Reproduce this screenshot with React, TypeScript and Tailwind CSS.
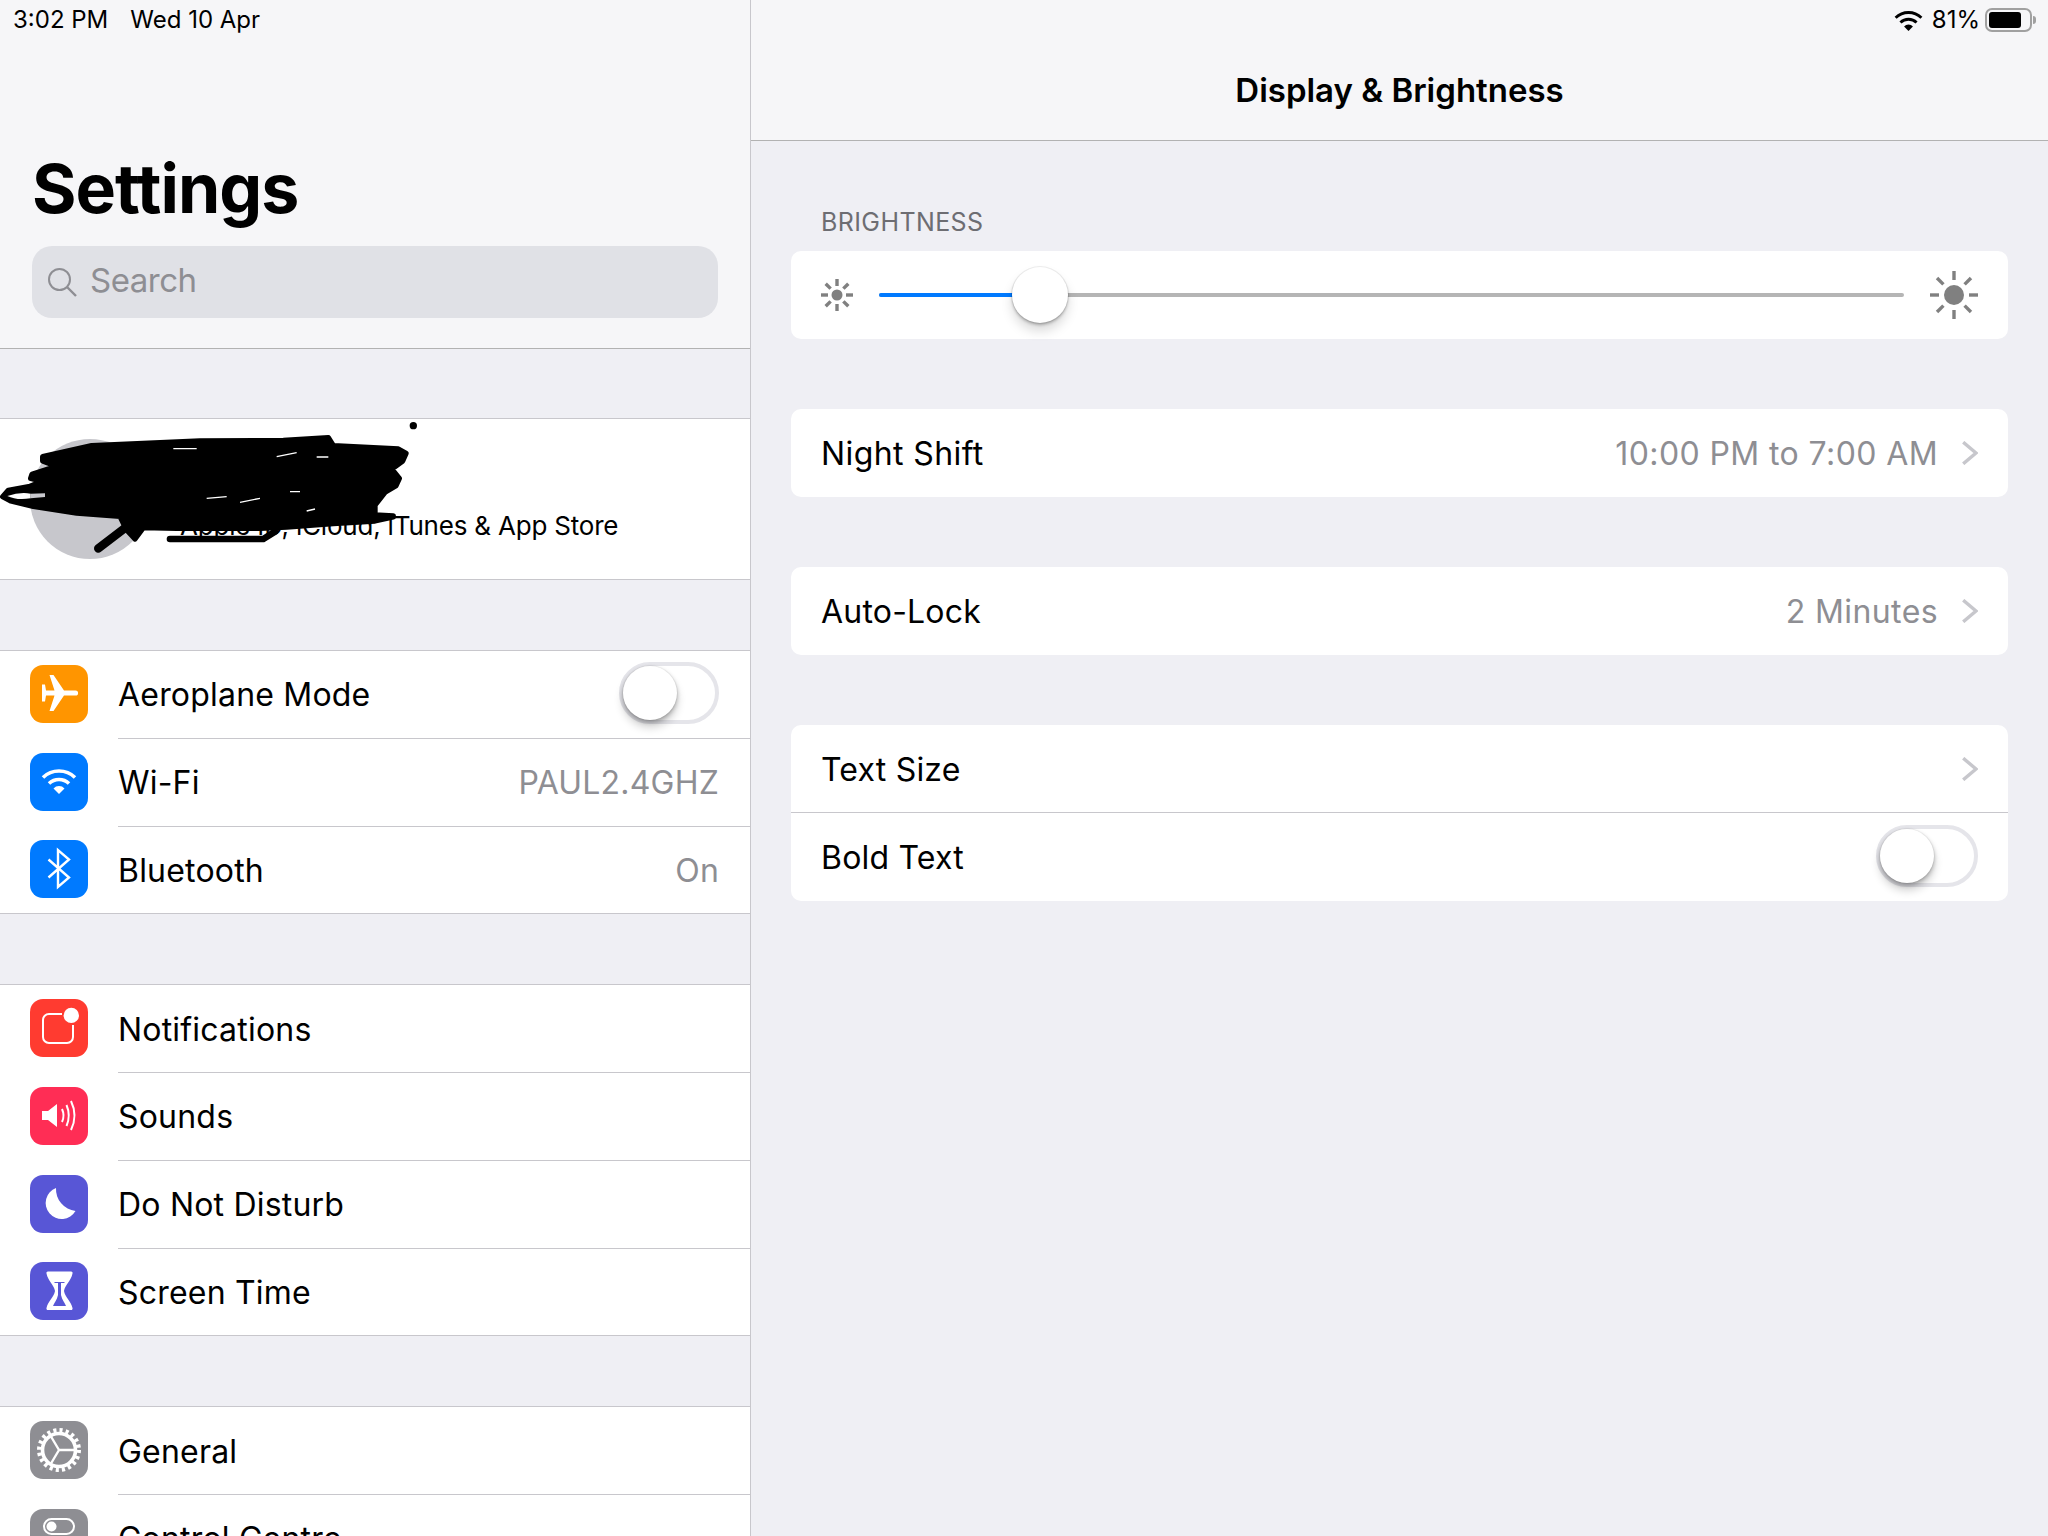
import type { ReactNode } from "react";

function Plane() {
  return (
    <svg viewBox="0 0 58 58" className="h-[58px] w-[58px]">
      <path fill="#fff" d="M45.5 25.4H34L23.5 10h-4l5 15.4H16l-1-5.9h-3v17h3l1-5.9h8.5L19.5 46h4L34 30.6h11.5a2.6 2.6 0 0 0 0-5.2Z" />
    </svg>
  );
}

function WifiFan({ className }: { className: string }) {
  return (
    <svg viewBox="0 0 36 26" className={className}>
      <path d="M2 9.5a23 23 0 0 1 32 0" fill="none" stroke="currentColor" strokeWidth="3.6" />
      <path d="M8 15.5a14.5 14.5 0 0 1 20 0" fill="none" stroke="currentColor" strokeWidth="3.6" />
      <path d="M12.5 20.5a7.5 7.5 0 0 1 11 0L18 26Z" fill="currentColor" />
    </svg>
  );
}

function Bluetooth() {
  return (
    <svg viewBox="0 0 58 58" className="h-[58px] w-[58px]">
      <path d="M18.5 19.5 39 37.5 28 47V10l11 9.5-20.5 18" fill="none" stroke="#fff" strokeWidth="2.4" />
    </svg>
  );
}

function Bell() {
  return (
    <svg viewBox="0 0 58 58" className="h-[58px] w-[58px]">
      <path d="M32 15H19a6 6 0 0 0-6 6v17a6 6 0 0 0 6 6h18a6 6 0 0 0 6-6V26" fill="none" stroke="#fff" strokeWidth="2" />
      <circle cx="41.3" cy="16.4" r="7.7" fill="#fff" />
    </svg>
  );
}

function Speaker() {
  return (
    <svg viewBox="0 0 58 58" className="h-[58px] w-[58px]">
      <path fill="#fff" d="M12 24h6l9-7v23l-9-7h-6Z" />
      <g fill="none" stroke="#fff" strokeWidth="2">
        <path d="M32 22q3 6.500 0 13" />
        <path d="M36.500 18q4.500 10.500 0 21" />
        <path d="M41 14q7 14.500 0 29" />
      </g>
    </svg>
  );
}

function Moon() {
  return (
    <svg viewBox="0 0 58 58" className="h-[58px] w-[58px]">
      <path fill="#fff" d="M26 13A16 16 0 1 0 45.500 36 22 22 0 0 1 26 13Z" />
    </svg>
  );
}

function Hourglass() {
  return (
    <svg viewBox="0 0 58 58" className="h-[58px] w-[58px]">
      <path fill="#fff" d="M18 9.500h23a1.500 1.500 0 0 1 1.500 2C41 19 35 23 34 29c1 6 7 10 8.500 17a1.500 1.500 0 0 1-1.500 2H18a1.500 1.500 0 0 1-1.500-2C18 39 24 35 25 29c-1-6-7-10-8.500-17.500a1.500 1.500 0 0 1 1.500-2Z" />
      <path fill="#5856d6" d="M24.500 20h10v1H31v12c1 5 4 8 5 11H23c1-3 4-6 5-11V21h-3.500Z" />
    </svg>
  );
}

function Gear() {
  return (
    <svg viewBox="0 0 58 58" className="h-[58px] w-[58px]">
      <g fill="none" stroke="#fff">
        <circle cx="29" cy="29" r="16.500" strokeWidth="3.600" />
        <circle cx="29" cy="29" r="19.500" strokeWidth="5" strokeDasharray="3.060 3.060" />
        <path d="M29 29h15M29 29l-8-13.500M29 29l-8 13.500" strokeWidth="2.400" />
      </g>
    </svg>
  );
}

function ToggleGlyph() {
  return (
    <svg viewBox="0 0 58 58" className="h-[58px] w-[58px]">
      <rect x="14" y="10" width="30" height="15" rx="7.500" fill="none" stroke="#fff" strokeWidth="2" />
      <circle cx="21.500" cy="17.500" r="5" fill="#fff" />
    </svg>
  );
}

function Sun({ size, r, inner }: { size: number; r: number; inner: number }) {
  const c = size / 2;
  return (
    <svg width={size} height={size} viewBox={`0 0 ${size} ${size}`} className="shrink-0">
      <circle cx={c} cy={c} r={r} fill="#808080" />
      <g stroke="#808080" strokeWidth="3.400">
        {[0, 45, 90, 135, 180, 225, 270, 315].map((a) => (
          <line key={a} x1={c} y1={0} x2={c} y2={c - inner} transform={`rotate(${a} ${c} ${c})`} />
        ))}
      </g>
    </svg>
  );
}

function Chevron() {
  return (
    <svg viewBox="0 0 16 24" className="h-6 w-4 shrink-0">
      <path d="M1.200 1.200 14 12 1.200 22.800" fill="none" stroke="#c7c7cc" strokeWidth="3.400" />
    </svg>
  );
}

function Switch({ wide }: { wide?: boolean }) {
  return (
    <div className={`relative mb-[2px] h-[62px] shrink-0 rounded-full border-[4px] border-[#e5e5ea] bg-white ${wide ? "w-[102px]" : "w-[100px]"}`}>
      <div className="h-[54px] w-[54px] rounded-full bg-white shadow-[0_7px_10px_rgba(0,0,0,0.2),0_2px_4px_rgba(0,0,0,0.25),0_0_0_1px_rgba(0,0,0,0.04)]" />
    </div>
  );
}

function Row({ icon, color, label, value, control, last }: { icon: ReactNode; color: string; label: string; value?: string; control?: ReactNode; last?: boolean }) {
  return (
    <div className={last ? "flex h-[86.75px] items-center" : "flex h-[87.75px] items-center"}>
      <div className={`mb-[2px] ml-[30px] h-[58px] w-[58px] shrink-0 rounded-[13px] ${color}`}>{icon}</div>
      <div className={`ml-[30px] flex h-full flex-1 items-center justify-between pr-[31px] ${last ? "" : "border-b border-[#c8c7cc]"}`}>
        <span className="pt-0.5 text-[32px] tracking-[0.2px] text-black">{label}</span>
        {value && <span className="pt-0.5 text-[32px] tracking-[0.2px] text-[#8e8e93]">{value}</span>}
        {control}
      </div>
    </div>
  );
}

// marker scribble over the account name, traced from the screenshot
function Scribble() {
  return (
    <svg viewBox="0 0 1290 450" className="absolute left-0 top-[-4px] h-[150px] w-[430px]">
      <path
        fill="#000"
        stroke="#000"
        strokeWidth="16"
        strokeLinejoin="round"
        d="M128 125 275 92 600 78 850 76 985 68 1000 92 1195 102 1218 115 1208 138 1175 162 1198 190 1188 212 1155 232 1125 270 1125 300 1180 303 1180 306 1125 318 1000 326 860 336 780 340 530 340 430 338 405 372 380 345 360 304 230 294 100 274 32 258 8 245 25 226 90 214 130 199 92 190 96 178 170 154 128 138Z"
      />
      <path d="M510 372H790L825 350" stroke="#000" strokeWidth="20" strokeLinecap="round" strokeLinejoin="round" fill="none" />
      <path d="M22 243Q60 230 92 236V250Q50 257 22 243Z" fill="#fff" />
      <path d="M92 236 135 235V246L92 250Z" fill="#c7c7cc" />
      <path d="M400 320 295 400" stroke="#000" strokeWidth="26" strokeLinecap="round" fill="none" />
      <path d="M520 101H590M830 125 890 113M950 126H985M620 250 680 245M720 262 780 250M920 288 945 282M870 230H900" stroke="#fff" strokeWidth="4" fill="none" />
      <circle cx="1240" cy="32" r="11" fill="#000" />
    </svg>
  );
}

export default function App() {
  return (
    <div className="flex h-[1536px] w-[2048px] overflow-hidden bg-[#efeff4] font-['Inter','Liberation_Sans',sans-serif]">
      <aside className="h-full w-[751px] shrink-0 overflow-hidden border-r border-[#c8c7cc]">
        <header className="flex h-[349px] flex-col border-b border-[#b2b2b2] bg-[#f6f6f8]">
          <div className="flex h-10 items-center gap-[22px] pl-[13px] text-[24px] tracking-[0px] text-black">
            <span>3:02 PM</span>
            <span>Wed 10 Apr</span>
          </div>
          <h1 className="ml-[32px] mt-[110px] text-[68px] leading-[76px] font-bold tracking-[-1px] text-black">Settings</h1>
          <div className="mx-[32px] mt-[20px] flex h-[72px] items-center rounded-[20px] bg-[#e0e1e6] pl-[15px] text-[#8e8e93]">
            <svg viewBox="0 0 30 30" className="h-[30px] w-[30px]">
              <circle cx="12.500" cy="12.500" r="10.500" fill="none" stroke="currentColor" strokeWidth="2" />
              <path d="m20 20 9 9" stroke="currentColor" strokeWidth="2.400" fill="none" />
            </svg>
            <span className="mb-0.5 ml-[13px] text-[33px] tracking-[-0.5px]">Search</span>
          </div>
        </header>

        <section className="relative mt-[69px] h-[162px] border-y border-[#c8c7cc] bg-white">
          <div className="ml-[30px] flex h-full items-center">
            <div className="h-[120px] w-[120px] rounded-full bg-[#c7c7cc]" />
            <div className="ml-[30px] mt-[52px] text-[26px] tracking-[-0.2px] text-black">Apple ID, iCloud, iTunes &amp; App Store</div>
          </div>
          <Scribble />
        </section>

        <section className="mt-[70px] border-y border-[#c8c7cc] bg-white">
          <Row icon={<Plane />} color="bg-[#ff9500]" label="Aeroplane Mode" control={<Switch />} />
          <Row
            icon={
              <div className="flex h-full items-center justify-center pb-px text-white">
                <WifiFan className="h-[26px] w-9" />
              </div>
            }
            color="bg-[#007aff]"
            label="Wi-Fi"
            value="PAUL2.4GHZ"
          />
          <Row icon={<Bluetooth />} color="bg-[#007aff]" label="Bluetooth" value="On" last />
        </section>

        <section className="mt-[70px] border-y border-[#c8c7cc] bg-white">
          <Row icon={<Bell />} color="bg-[#ff3b30]" label="Notifications" />
          <Row icon={<Speaker />} color="bg-[#ff2d55]" label="Sounds" />
          <Row icon={<Moon />} color="bg-[#5856d6]" label="Do Not Disturb" />
          <Row icon={<Hourglass />} color="bg-[#5856d6]" label="Screen Time" last />
        </section>

        <section className="mt-[70px] border-t border-[#c8c7cc] bg-white">
          <Row icon={<Gear />} color="bg-[#8e8e93]" label="General" />
          <Row icon={<ToggleGlyph />} color="bg-[#8e8e93]" label="Control Centre" />
        </section>
      </aside>

      <main className="h-full flex-1">
        <header className="relative flex h-[141px] items-center justify-center border-b border-[#b2b2b2] bg-[#f6f6f8]">
          <div className="absolute right-[12px] top-2 flex h-6 items-center text-[24px] tracking-[0px] text-black">
            <WifiFan className="h-[21px] w-[29px]" />
            <span className="ml-[9px]">81%</span>
            <div className="ml-[5px] h-6 w-[47px] rounded-[7px] border-2 border-[#a0a0a0] p-[2px]">
              <div className="h-full w-[32px] rounded-[3px] bg-black" />
            </div>
            <div className="ml-px h-2 w-[3px] rounded-r-full bg-[#a0a0a0]" />
          </div>
          <h2 className="pt-[42px] text-[33px] font-semibold tracking-[0px] text-black">Display &amp; Brightness</h2>
        </header>

        <div className="flex flex-col px-[40px]">
          <div className="pl-[30px] pt-[67px] text-[25px] leading-[28px] tracking-[0.4px] text-[#6d6d72]">BRIGHTNESS</div>
          <div className="mt-[15px] flex h-[88px] items-center gap-[26px] rounded-[10px] bg-white px-[30px]">
            <Sun size={32} r={5.500} inner={9} />
            <div className="relative flex h-1 flex-1 rounded-full bg-[#b5b5b5]">
              <div className="h-1 w-[161px] rounded-l-full bg-[#007aff]" />
              <div className="absolute left-[133px] top-[-26px] h-14 w-14 rounded-full bg-white shadow-[0_8px_12px_rgba(0,0,0,0.15),0_2px_3px_rgba(0,0,0,0.25),0_0_0_1px_rgba(0,0,0,0.06)]" />
            </div>
            <Sun size={48} r={10} inner={15} />
          </div>

          <div className="mt-[70px] flex h-[88px] items-center rounded-[10px] bg-white pl-[30px] pr-[30px]">
            <span className="flex-1 pt-0.5 text-[32px] tracking-[0.4px] text-black">Night Shift</span>
            <span className="mr-6 pt-0.5 text-[32px] tracking-[0.4px] text-[#8e8e93]">10:00 PM to 7:00 AM</span>
            <Chevron />
          </div>

          <div className="mt-[70px] flex h-[88px] items-center rounded-[10px] bg-white pl-[30px] pr-[30px]">
            <span className="flex-1 pt-0.5 text-[32px] tracking-[0.2px] text-black">Auto-Lock</span>
            <span className="mr-6 pt-0.5 text-[32px] tracking-[0.4px] text-[#8e8e93]">2 Minutes</span>
            <Chevron />
          </div>

          <div className="mt-[70px] rounded-[10px] bg-white">
            <div className="flex h-[88px] items-center justify-between border-b border-[#c8c7cc] pl-[30px] pr-[30px]">
              <span className="pt-0.5 text-[32px] tracking-[0.2px] text-black">Text Size</span>
              <Chevron />
            </div>
            <div className="flex h-[88px] items-center justify-between pl-[30px] pr-[30px]">
              <span className="pt-0.5 text-[32px] tracking-[0.2px] text-black">Bold Text</span>
              <Switch wide />
            </div>
          </div>
        </div>
      </main>
    </div>
  );
}
